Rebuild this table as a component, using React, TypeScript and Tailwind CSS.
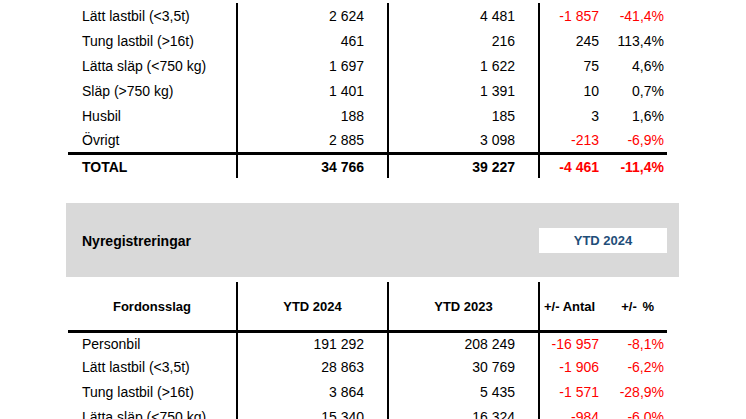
import React from "react";

type Row = { name: string; a: string; b: string; c: string; d: string; red?: boolean };

const top: Row[] = [
  { name: "Lätt lastbil (<3,5t)", a: "2 624", b: "4 481", c: "-1 857", d: "-41,4%", red: true },
  { name: "Tung lastbil (>16t)", a: "461", b: "216", c: "245", d: "113,4%" },
  { name: "Lätta släp (<750 kg)", a: "1 697", b: "1 622", c: "75", d: "4,6%" },
  { name: "Släp (>750 kg)", a: "1 401", b: "1 391", c: "10", d: "0,7%" },
  { name: "Husbil", a: "188", b: "185", c: "3", d: "1,6%" },
  { name: "Övrigt", a: "2 885", b: "3 098", c: "-213", d: "-6,9%", red: true },
];

const bottom: Row[] = [
  { name: "Personbil", a: "191 292", b: "208 249", c: "-16 957", d: "-8,1%", red: true },
  { name: "Lätt lastbil (<3,5t)", a: "28 863", b: "30 769", c: "-1 906", d: "-6,2%", red: true },
  { name: "Tung lastbil (>16t)", a: "3 864", b: "5 435", c: "-1 571", d: "-28,9%", red: true },
  { name: "Lätta släp (<750 kg)", a: "15 340", b: "16 324", c: "-984", d: "-6,0%", red: true },
];

const grid = "grid grid-cols-[168px_151px_151px_64px_65px]";

function DataRow({ r, h, extra = "" }: { r: Row; h: string; extra?: string }) {
  const diff = r.red ? "text-[#ff0000]" : "text-black";
  return (
    <div className={`${grid} ${h} ${extra}`}>
      <div className="flex items-center pl-[14px]">{r.name}</div>
      <div className="flex items-center justify-end pr-[23px] border-l-2 border-black">{r.a}</div>
      <div className="flex items-center justify-end pr-[23px] border-l-2 border-black">{r.b}</div>
      <div className={`flex items-center justify-end pr-[3px] border-l-2 border-black ${diff}`}>{r.c}</div>
      <div className={`flex items-center justify-end pr-[3px] ${diff}`}>{r.d}</div>
    </div>
  );
}

export default function App() {
  return (
    <div
      className="w-[746px] h-[419px] overflow-hidden bg-white text-black text-[14px] leading-none"
      style={{ fontFamily: '"Liberation Sans", Arial, sans-serif' }}
    >
      <div className="ml-[68px] w-[599px]">
        <DataRow r={top[0]} h="h-[28px] pt-[3px]" />
        {top.slice(1).map((r) => (
          <DataRow key={r.name} r={r} h={r.name === "Övrigt" ? "h-[24px]" : "h-[25px]"} />
        ))}
        <div className={`${grid} h-[26px] border-t-[3px] border-black font-bold`}>
          <div className="flex items-center pl-[14px]">TOTAL</div>
          <div className="flex items-center justify-end pr-[23px] border-l-2 border-black">34 766</div>
          <div className="flex items-center justify-end pr-[23px] border-l-2 border-black">39 227</div>
          <div className="flex items-center justify-end pr-[3px] border-l-2 border-black text-[#ff0000]">-4 461</div>
          <div className="flex items-center justify-end pr-[3px] text-[#ff0000]">-11,4%</div>
        </div>
      </div>

      <div className="mt-[25px] ml-[66px] w-[613px] h-[74px] bg-[#d9d9d9] flex items-center justify-between">
        <div className="pl-[16px] font-bold pt-[2px]">Nyregistreringar</div>
        <div className="mr-[12px] w-[128px] h-[25px] bg-white flex items-center justify-center font-bold text-[13px] text-[#1f4e79]">
          YTD 2024
        </div>
      </div>

      <div className="mt-[5px] ml-[68px] w-[599px]">
        <div className={`${grid} h-[51px] font-bold text-[13px] border-b-[3px] border-black`}>
          <div className="flex items-center justify-center pt-[1px]">Fordonsslag</div>
          <div className="flex items-center justify-center border-l-2 border-black pt-[1px]">YTD 2024</div>
          <div className="flex items-center justify-center border-l-2 border-black pt-[1px]">YTD 2023</div>
          <div className="flex items-center pl-[4px] border-l-2 border-black pt-[1px] whitespace-nowrap">+/- Antal</div>
          <div className="flex items-center justify-end pr-[13px] pt-[1px] whitespace-nowrap [word-spacing:2px]">+/- %</div>
        </div>
        <DataRow r={bottom[0]} h="h-[21px]" />
        {bottom.slice(1).map((r) => (
          <DataRow key={r.name} r={r} h="h-[25px]" />
        ))}
      </div>
    </div>
  );
}
